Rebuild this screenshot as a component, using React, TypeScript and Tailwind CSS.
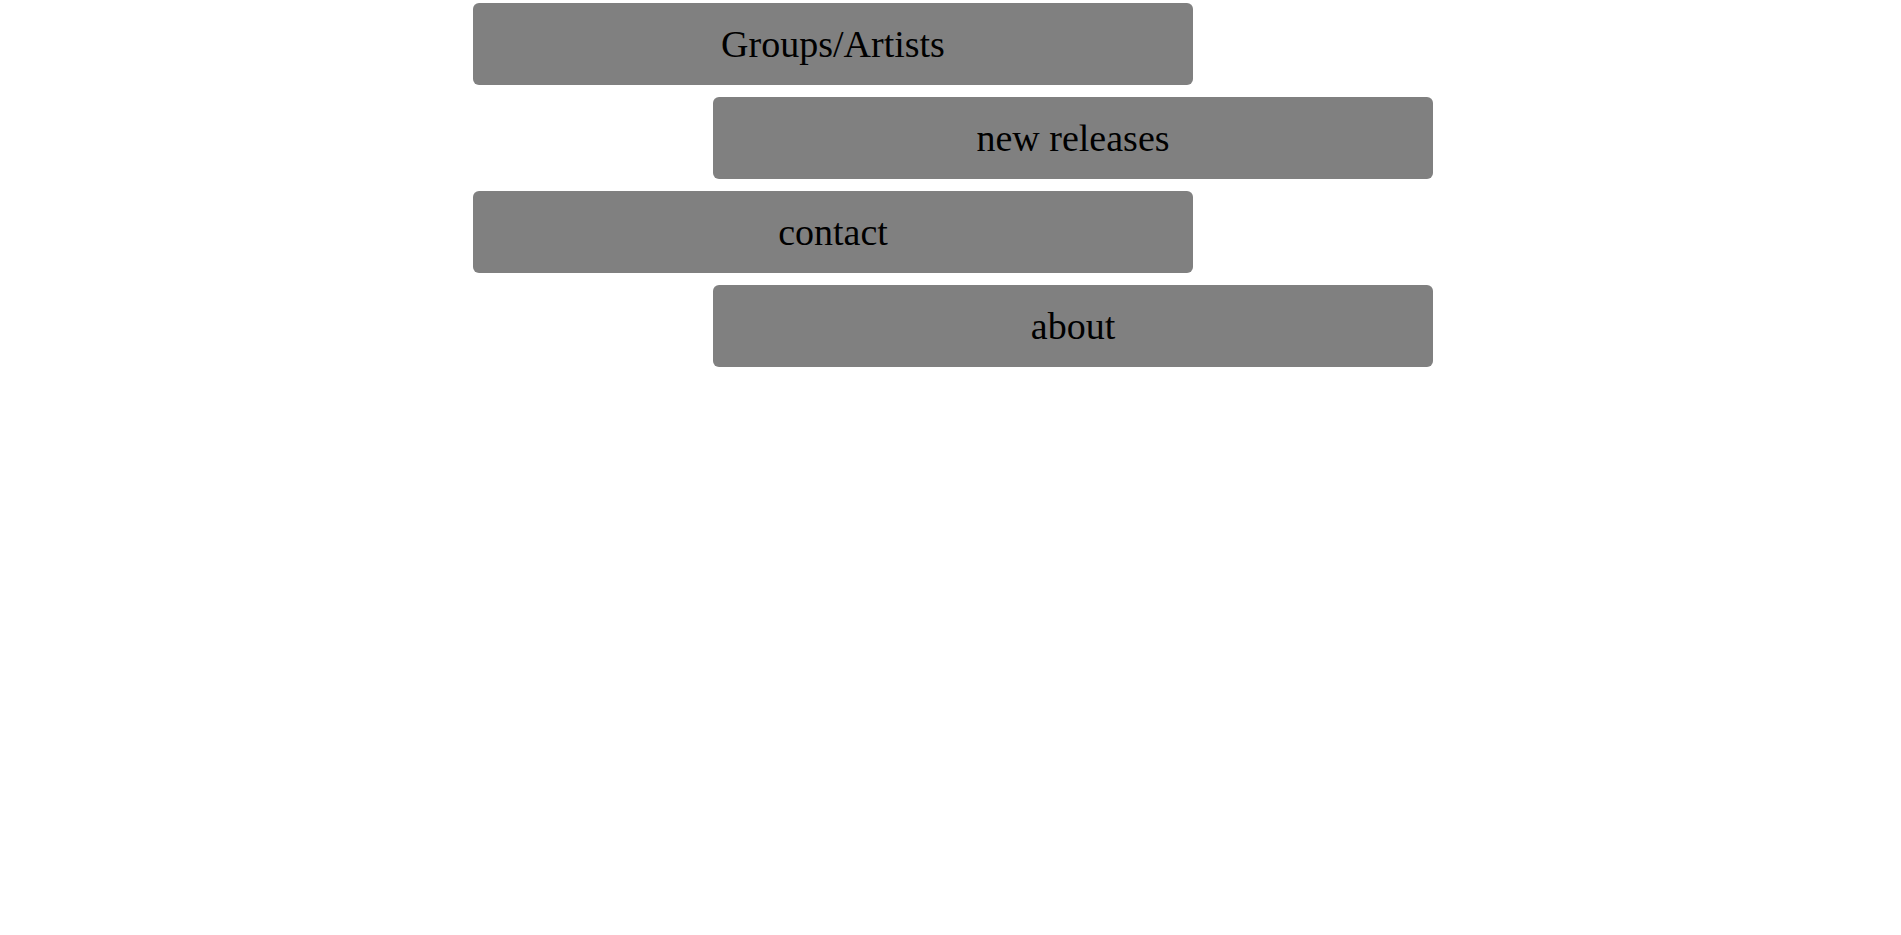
const items = [
  { label: 'Groups/Artists', href: '#groups', side: 'self-start' },
  { label: 'new releases', href: '#releases', side: 'self-end' },
  { label: 'contact', href: '#contact', side: 'self-start' },
  { label: 'about', href: '#about', side: 'self-end' },
];

export default function App() {
  return (
    <div className="min-h-screen bg-white pt-[3px] pl-[5px] font-['Liberation_Serif','Times_New_Roman',serif] text-black">
      <nav className="mx-auto flex w-full max-w-[960px] flex-col gap-3">
        {items.map((item) => (
          <a
            key={item.label}
            href={item.href}
            className={`block w-3/4 rounded-md bg-[#808080] py-[19px] text-center text-[38px] leading-[44px] ${item.side}`}
          >
            {item.label}
          </a>
        ))}
      </nav>
    </div>
  );
}
